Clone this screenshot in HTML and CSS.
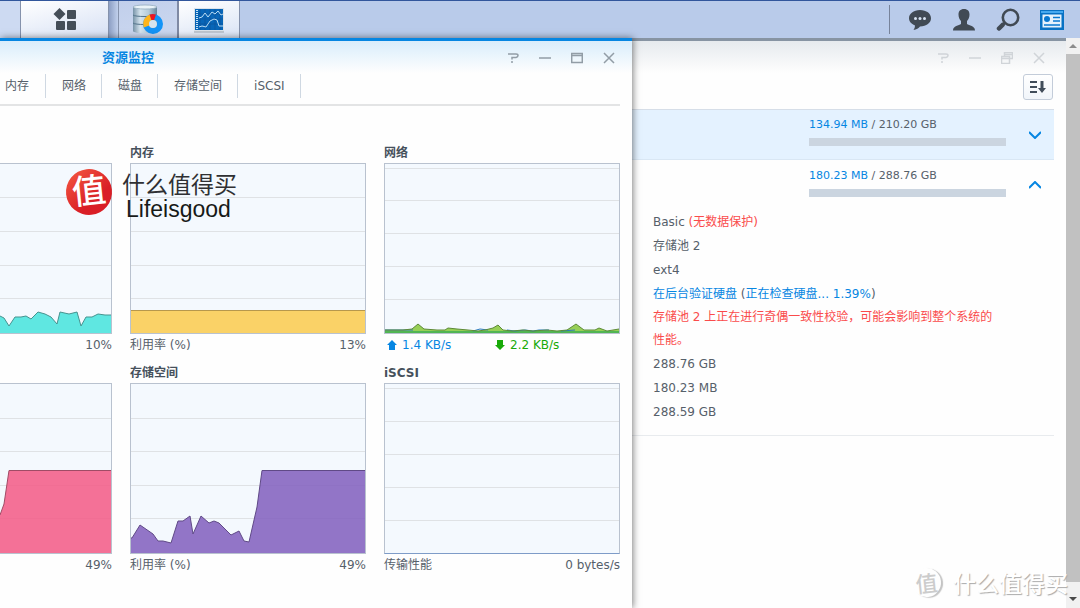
FILE: index.html
```html
<!DOCTYPE html>
<html lang="zh-CN">
<head>
<meta charset="utf-8">
<title>资源监控</title>
<link rel="stylesheet" href="styles.css">
</head>
<body>
<header class="taskbar">
  <nav class="apps">
    <span class="edge"></span>
    <button class="app launcher" aria-label="主菜单">
      <svg width="24" height="24" viewBox="0 0 24 24" fill="#454e58"><path d="M6.500 0l6 6-6 6L.5 6z"/><rect x="14" y="2" width="9" height="9" rx="1"/><rect x="3" y="13" width="9" height="9" rx="1"/><rect x="14" y="13" width="9" height="9" rx="1"/></svg>
    </button>
    <span class="divider"></span>
    <button class="app storage" aria-label="存储空间管理员">
      <svg width="32" height="32" viewBox="0 0 32 32">
        <defs><linearGradient id="cyl"><stop offset="0" stop-color="#7793a8"/><stop offset=".3" stop-color="#d5e4ee"/><stop offset=".65" stop-color="#b5cbd9"/><stop offset="1" stop-color="#66849a"/></linearGradient></defs>
        <path d="M1 3v24c0 3 24 3 24 0V3z" fill="url(#cyl)"/>
        <ellipse cx="13" cy="3" rx="12" ry="2" fill="#eaf3f8" stroke="#8ba5b7" stroke-width=".7"/>
        <path d="M1 11c1 2 23 2 24 0M1 19c1 2 23 2 24 0" fill="none" stroke="#54748b" stroke-width="1"/>
        <circle cx="21" cy="20" r="7" fill="none" stroke="#1394f7" stroke-width="6"/>
        <path d="M14.500 22.500a7 7 0 0 1 4.500-9.200" fill="none" stroke="#ffb51b" stroke-width="6"/>
        <path d="M18.500 13.400a7 7 0 0 1 4.500 0" fill="none" stroke="#ec1721" stroke-width="6"/>
        <circle cx="21" cy="20" r="4" fill="#d5e4ee"/>
      </svg>
    </button>
    <button class="app monitor" aria-label="资源监控">
      <svg width="32" height="26" viewBox="0 0 32 26">
        <rect x="1" y="1" width="30" height="24" fill="#dce3ea"/><path d="M1 25h30" stroke="#9fa9b3" stroke-width="1"/>
        <rect x="2" y="2" width="28" height="21" fill="#0866b8"/>
        <path d="M7 2v21M12 2v21M17 2v21M22 2v21M27 2v21M2 7h28M2 12h28M2 17h28" stroke="#0a58a2" stroke-width="1"/>
        <path d="M4 3v19" stroke="#c9e3f5" stroke-width="2" stroke-dasharray="1 1"/>
        <path d="M6 11l3-1 3-4 3 4 4-5 3 2 3-3 3 4 2-1M6 20l3-1 4 1 4-6 4-2 3 1 2 6h4" fill="none" stroke="#b8dcf4" stroke-width="1"/>
      </svg>
    </button>
  </nav>
  <div class="tray">
    <button class="tray-btn" aria-label="通知"><svg width="24" height="24" viewBox="0 0 24 24"><path d="M12 2C5.500 2 1 5.700 1 10.200c0 3 2.300 5.800 5.800 7.100.4 1.700-.3 3.200-1.300 4.700 3-.6 5.200-1.900 6.500-3.600 6.500 0 11-3.600 11-8.200S18.500 2 12 2z" fill="#414a54"/><g fill="#d8e3f2"><circle cx="7.500" cy="10.500" r="1.500"/><circle cx="12" cy="10.500" r="1.500"/><circle cx="16.500" cy="10.500" r="1.500"/></g></svg></button>
    <button class="tray-btn" aria-label="用户"><svg width="24" height="24" viewBox="0 0 24 24"><path d="M12 1c3.800 0 5.500 2.300 5.500 5.500 0 2.800-1 5-2.500 6.500v3c2 1.800 8 1.500 8 6.500H1c0-5 6-4.700 8-6.500v-3c-1.500-1.500-2.500-3.700-2.500-6.500C6.500 3.300 8.200 1 12 1z" fill="#414a54"/></svg></button>
    <button class="tray-btn" aria-label="搜索"><svg width="24" height="24" viewBox="0 0 24 24" fill="none" stroke="#414a54"><circle cx="14.500" cy="9.500" r="7.700" stroke-width="2.600"/><path d="M8.500 15l-2 2" stroke-width="3"/><path d="M6.500 17l-3.500 3.500" stroke-width="4.500" stroke-linecap="round"/></svg></button>
    <button class="tray-btn" aria-label="小工具"><svg width="24" height="20" viewBox="0 0 24 20"><rect width="24" height="20" fill="#0872c4"/><path d="M1 1h22v2H1z" fill="#45a9f0"/><path d="M2.500 4.500h19v13h-19z" fill="#e5f2fc"/><circle cx="7" cy="9" r="3" fill="#0878d0"/><path d="M13 7.500h7M13 11h7M4 15h16" stroke="#0878d0" stroke-width="1.500"/></svg></button>
  </div>
</header>

<main class="desktop">
  <section class="window front">
    <div class="titlebar">
      <h1 class="title">资源监控</h1>
      <div class="controls">
        <button class="control" aria-label="帮助"><svg width="12" height="12" viewBox="0 0 12 12"><path d="M1 2h8q2 0 2 1.500T9 5.500H5v2M5 9v2"/></svg></button>
        <button class="control" aria-label="最小化"><svg width="12" height="12" viewBox="0 0 12 12"><path d="M0 6h12"/></svg></button>
        <button class="control" aria-label="最大化"><svg width="12" height="12" viewBox="0 0 12 12"><path d="M.7 1.500h10.600v9H.7zM0 3.500h12"/></svg></button>
        <button class="control" aria-label="关闭"><svg width="12" height="12" viewBox="0 0 12 12"><path d="M1 1l10 10M11 1L1 11"/></svg></button>
      </div>
    </div>
    <nav class="tabs">
      <button class="tab">内存</button><button class="tab">网络</button><button class="tab">磁盘</button><button class="tab">存储空间</button><button class="tab">iSCSI</button>
    </nav>
    <div class="charts">
      <article class="card">
        <h2 class="card-title">&nbsp;</h2>
        <div class="plot cut"><svg class="graph" viewBox="0 0 111 169" preserveAspectRatio="none">
          <path class="grid" d="M0 33.500h111M0 67.500h111M0 101.500h111M0 134.500h111"/>
          <path fill="#48e3dc" class="area" d="M0 169V152L4 154 9 162 15 153 21 153 26 152 31 155 38 148 45 150 51 153 57 160 60 148 69 150 77 148 81 162 86 153 92 153 98 150 105 151 111 151V169z"/>
          <path class="line" stroke="#46938f" d="M0 152L4 154 9 162 15 153 21 153 26 152 31 155 38 148 45 150 51 153 57 160 60 148 69 150 77 148 81 162 86 153 92 153 98 150 105 151 111 151"/>
        </svg></div>
        <p class="legend"><span></span><span>10%</span></p>
      </article>
      <article class="card">
        <h2 class="card-title">内存</h2>
        <div class="plot"><svg class="graph" viewBox="0 0 234 169" preserveAspectRatio="none">
          <path class="grid" d="M0 33.500h234M0 67.500h234M0 101.500h234M0 134.500h234"/>
          <path class="area" fill="#facb50" d="M0 146h234v23H0z"/><path class="line" stroke="#b7984c" d="M0 146.500h234"/>
        </svg></div>
        <p class="legend"><span>利用率 (%)</span><span>13%</span></p>
      </article>
      <article class="card">
        <h2 class="card-title">网络</h2>
        <div class="plot"><svg class="graph" viewBox="0 0 234 169" preserveAspectRatio="none">
          <path class="grid" d="M0 4.500h234M0 36.500h234M0 69.500h234M0 102.500h234M0 135.500h234"/>
          <path fill="#97cf56" d="M0 169V166L18 166 27 165 33 160 39 165 52 166 60 166 63 164 72 165 83 166 93 167 100 166 108 164 113 161 118 166 127 167 138 166 148 167 162 166 172 167 182 166 191 160 199 166 210 166 214 164 222 167 234 165V169z"/>
          <path fill="#51b553" d="M0 167h234v2H0z"/>
          <path class="line" stroke="#2878bd" d="M0 166h28M88 167l7-2 8 1M122 166l8 1 10-1 8 1 6-1h10M176 167l14-1"/>
          <path class="line" stroke="#5d8a38" d="M0 166L18 166 27 165 33 160 39 165 52 166 60 166 63 164 72 165 83 166 93 167 100 166 108 164 113 161 118 166 127 167 138 166 148 167 162 166 172 167 182 166 191 160 199 166 210 166 214 164 222 167 234 165"/>
        </svg></div>
        <p class="legend rates"><span class="rate up"><svg width="10" height="10" viewBox="0 0 10 10" fill="currentColor"><path d="M5 0l5 5H8v5H2V5H0z"/></svg>1.4 KB/s</span><span class="rate down"><svg width="10" height="10" viewBox="0 0 10 10" fill="currentColor"><path d="M5 10l5-5H8V0H2v5H0z"/></svg>2.2 KB/s</span></p>
      </article>
      <article class="card">
        <h2 class="card-title">&nbsp;</h2>
        <div class="plot cut"><svg class="graph" viewBox="0 0 111 169" preserveAspectRatio="none">
          <path class="grid" d="M0 34.500h111M0 67.500h111M0 101.500h111M0 134.500h111"/>
          <path class="area" fill="#f35c87" d="M0 169V131L4 120 9 86.500H111V169z"/><path class="line" stroke="#a04c66" d="M0 131L4 120 9 86.500H111"/>
        </svg></div>
        <p class="legend"><span></span><span>49%</span></p>
      </article>
      <article class="card">
        <h2 class="card-title">存储空间</h2>
        <div class="plot"><svg class="graph" viewBox="0 0 234 169" preserveAspectRatio="none">
          <path class="grid" d="M0 34.500h234M0 67.500h234M0 101.500h234M0 134.500h234"/>
          <path class="area" fill="#8361bf" d="M0 169V154L1 154 9 141 22 150 27 157 32 157 40 159 47 137 52 137 59 132 62 150 70 132 78 139 83 137 88 139 93 144 100 151 108 147 113 157 118 158 126 123 131 86.500H234V169z"/>
          <path class="line" stroke="#604a87" d="M0 154L1 154 9 141 22 150 27 157 32 157 40 159 47 137 52 137 59 132 62 150 70 132 78 139 83 137 88 139 93 144 100 151 108 147 113 157 118 158 126 123 131 86.500H234"/>
        </svg></div>
        <p class="legend"><span>利用率 (%)</span><span>49%</span></p>
      </article>
      <article class="card">
        <h2 class="card-title">iSCSI</h2>
        <div class="plot idle"><svg class="graph" viewBox="0 0 234 169" preserveAspectRatio="none">
          <path class="grid" d="M0 4.500h234M0 37.500h234M0 70.500h234M0 103.500h234M0 136.500h234"/>
        </svg></div>
        <p class="legend"><span>传输性能</span><span>0 bytes/s</span></p>
      </article>
    </div>
  </section>

  <section class="window back">
    <div class="titlebar">
      <div class="controls">
        <button class="control" aria-label="帮助"><svg width="12" height="12" viewBox="0 0 12 12"><path d="M1 2h8q2 0 2 1.500T9 5.500H5v2M5 9v2"/></svg></button>
        <button class="control" aria-label="最小化"><svg width="12" height="12" viewBox="0 0 12 12"><path d="M0 6h12"/></svg></button>
        <button class="control" aria-label="还原"><svg width="12" height="12" viewBox="0 0 12 12"><path d="M3.500 4V.5h8v6H9M3 2.500h9M.5 4.500h8v7h-8zM0 6.500h9"/></svg></button>
        <button class="control" aria-label="关闭"><svg width="12" height="12" viewBox="0 0 12 12"><path d="M1 1l10 10M11 1L1 11"/></svg></button>
      </div>
    </div>
    <div class="tools">
      <button class="sort" aria-label="排序"><svg width="16" height="14" viewBox="0 0 16 14"><path d="M0 2h7M0 7h7M0 12h7" stroke="#414d5a" stroke-width="2"/><path d="M10.500 1h3v7H16l-4 5-4-5h2.500z" fill="#414d5a"/></svg></button>
    </div>
    <div class="volumes">
      <div class="volume selected">
        <div class="usage"><p class="amount"><span class="used">134.94 MB</span> / 210.20 GB</p><div class="bar"></div></div>
        <button class="toggle" aria-label="展开"><svg width="12" height="8" viewBox="0 0 12 8"><path d="M0 1l6 6 6-6"/></svg></button>
      </div>
      <div class="volume">
        <div class="usage"><p class="amount"><span class="used">180.23 MB</span> / 288.76 GB</p><div class="bar"></div></div>
        <button class="toggle" aria-label="收起"><svg width="12" height="8" viewBox="0 0 12 8"><path d="M0 7l6-6 6 6"/></svg></button>
      </div>
      <div class="details">
        <p>Basic <span class="warn">(无数据保护)</span></p>
        <p>存储池 2</p>
        <p>ext4</p>
        <p><a class="link" href="#">在后台验证硬盘</a> (<span class="link">正在检查硬盘... 1.39%</span>)</p>
        <p class="warn notice">存储池 2 上正在进行奇偶一致性校验，可能会影响到整个系统的性能。</p>
        <p>288.76 GB</p>
        <p>180.23 MB</p>
        <p>288.59 GB</p>
      </div>
    </div>
  </section>

  <div class="scrollbar">
    <button class="arrow" aria-label="向上"><svg width="8" height="4" viewBox="0 0 8 4"><path d="M4 0l4 4H0z" fill="#8c8c8c"/></svg></button>
    <div class="thumb"></div>
    <button class="arrow low" aria-label="向下"><svg width="8" height="4" viewBox="0 0 8 4"><path d="M4 4l4-4H0z" fill="#4a4a4a"/></svg></button>
  </div>
</main>

<div class="brand">
  <span class="seal">值</span>
  <div class="brand-text"><span>什么值得买</span><span class="author">Lifeisgood</span></div>
</div>
<div class="stamp"><span class="stamp-seal">值</span><span>什么值得买</span></div>
</body>
</html>
```
FILE: styles.css
```css
* { box-sizing: border-box; }
body {
  margin: 0;
  height: 100vh;
  overflow: hidden;
  position: relative;
  display: flex;
  flex-direction: column;
  background: #fefefe;
  color: #56606a;
  font: 12px/16px "DejaVu Sans", "Noto Sans CJK SC", sans-serif;
}
p, h1, h2 { margin: 0; }
button {
  margin: 0;
  padding: 0;
  border: 0;
  background: none;
  color: inherit;
  font: inherit;
}
svg { display: block; }

.taskbar {
  flex: none;
  height: 38px;
  display: flex;
  justify-content: space-between;
  border-top: 1px solid #31569c;
  background: #b9cbea;
}
.apps { display: flex; }
.edge { width: 21px; background: #cddaf2; border-right: 1px solid #8592ac; }
.app {
  display: flex;
  align-items: center;
  justify-content: center;
  border-right: 1px solid #8592ac;
}
.launcher { width: 88px; background: linear-gradient(165deg, #fff, #d6e0f4); }
.divider { width: 10px; background: linear-gradient(90deg, #8d9fc4, #c1d0ec); border-right: 1px solid #8592ac; }
.storage { width: 60px; background: linear-gradient(165deg, #c1cfeb, #ccd8f0); border-right: 2px solid #7f8aa4; }
.monitor { width: 61px; background: linear-gradient(165deg, #fff, #d9e3f5); }
.tray {
  display: flex;
  align-items: center;
  gap: 20px;
  margin: 4px 16px 4px 0;
  padding-left: 18px;
  border-left: 1px solid #77839a;
}

.desktop { flex: 1; min-height: 0; display: flex; }
.window { min-width: 0; background: #fefefe; }
.front {
  flex: 632;
  position: relative;
  z-index: 1;
  border-top: 3px solid #0686e2;
  background: linear-gradient(#d9edfb, #fefefe 32px);
  box-shadow: 1px 0 7px rgba(0, 0, 0, .5);
}
.back {
  flex: 434;
  border-top: 3px solid #8794a3;
  background: linear-gradient(#e6eaee, #fefefe 32px);
}
.titlebar { height: 33px; display: flex; align-items: center; }
.title { padding-left: 102px; color: #0686e2; font-size: 13px; font-weight: bold; }
.controls { display: flex; margin-left: auto; padding-right: 7px; }
.back .controls { padding-right: 11px; }
.control { width: 32px; height: 24px; display: flex; align-items: center; justify-content: center; }
.control svg { fill: none; stroke: #929da6; stroke-width: 1.500; }
.back .control svg { stroke: #d0d4d8; }
.tabs {
  display: flex;
  margin-right: 12px;
  padding: 0 0 6px 5px;
  border-bottom: 2px solid #e3e4e5;
}
.tab { height: 24px; padding: 0 15px 0 16px; border-right: 1px solid #cfd8e2; }
.tab:first-child { padding: 0 16px 0 0; }

.charts {
  display: grid;
  grid-template-columns: 112px 1fr 1fr;
  gap: 12px 18px;
  padding: 39px 12px 0 0;
}
.card-title { margin-bottom: 2px; color: #46515c; font-size: 12px; line-height: 16px; }
.plot { height: 171px; border: 1px solid #b9c2cf; background: #f4f9fe; }
.cut { border-left: 0; }
.idle { border-bottom-color: #7e9cc8; }
.graph { width: 100%; height: 100%; }
.grid { stroke: #dfe2e5; }
.area { opacity: .87; }
.line { fill: none; }
.legend { display: flex; justify-content: space-between; margin-top: 3px; }
.rates { display: grid; grid-template-columns: 108px 1fr; padding-left: 3px; }
.rate { display: flex; align-items: center; gap: 5px; }
.up { color: #0686e2; }
.down { color: #18aa08; }

.tools { display: flex; justify-content: flex-end; padding-right: 13px; }
.sort {
  width: 30px;
  height: 26px;
  display: flex;
  align-items: center;
  justify-content: center;
  border: 1px solid #c3ccd9;
  border-radius: 3px;
  background: linear-gradient(#fff, #f1f5fa);
}
.volumes {
  margin: 9px 12px 0 0;
  border-top: 1px solid #d6dee8;
  border-bottom: 1px solid #e8ebee;
}
.volume {
  height: 50px;
  display: flex;
  justify-content: flex-end;
  align-items: center;
  padding-right: 13px;
}
.selected { background: #e4f2ff; border-bottom: 1px solid #d9e7f4; }
.usage { width: 197px; padding-bottom: 6px; }
.amount { font-size: 11px; }
.used, .link { color: #0686e2; text-decoration: none; }
.bar { height: 8px; margin-top: 5px; background: #cbd5e0; }
.toggle { margin-left: 23px; }
.toggle svg { fill: none; stroke: #0686e2; stroke-width: 2; }
.details { padding: 0 52px 11px 21px; line-height: 24px; }
.warn { color: #fa4b4b; }
.notice { line-height: 23px; }

.scrollbar { flex: 0 0 14px; display: flex; flex-direction: column; background: #f1f1f1; }
.arrow { height: 16px; display: flex; align-items: center; justify-content: center; }
.low { height: 26px; padding-top: 8px; }
.thumb { flex: 1; background: #c1c1c1; }

.brand {
  position: absolute;
  z-index: 2;
  left: 66px;
  top: 169px;
  display: flex;
  gap: 10px;
  color: #2f3033;
  font: 23px/24px "Liberation Sans", "Noto Sans CJK SC", sans-serif;
}
.seal {
  width: 46px;
  height: 46px;
  border-radius: 50%;
  background: linear-gradient(145deg, #f55a42, #d91f26 65%);
  color: #fff;
  font-size: 34px;
  font-weight: 500;
  line-height: 44px;
  text-align: center;
  transform: rotate(-6deg);
}
.brand-text { display: flex; flex-direction: column; padding-top: 4px; }
.author { padding-left: 4px; color: #171a18; }
.stamp {
  position: absolute;
  z-index: 2;
  right: 12px;
  bottom: 11px;
  display: flex;
  align-items: center;
  gap: 12px;
  color: #fff;
  font: 500 23px/30px "Noto Sans CJK SC", sans-serif;
  text-shadow: 1px 1px 1px #aaa;
}
.stamp-seal {
  width: 29px;
  height: 29px;
  border-radius: 50%;
  box-shadow: 2px 1px 1px #c4c4c4;
  background: #fefefe;
  color: #ccc;
  font-size: 22px;
  line-height: 28px;
  text-align: center;
  text-shadow: none;
  transform: rotate(-6deg);
}
```
